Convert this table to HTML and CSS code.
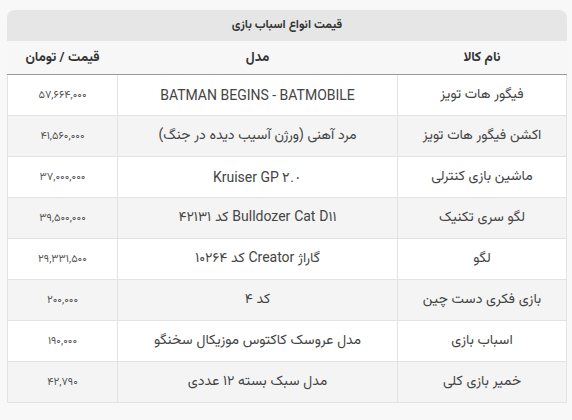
FILE: index.html
```html
<!DOCTYPE html>
<html lang="fa" dir="rtl">
<head>
<meta charset="utf-8">
<link rel="stylesheet" href="styles.css">
</head>
<body>
<div class="wrap">
  <table class="price-table">
    <caption class="caption">قیمت انواع اسباب بازی</caption>
    <thead>
      <tr>
        <th class="c-name">نام کالا</th>
        <th class="c-model">مدل</th>
        <th class="c-price">قیمت / تومان</th>
      </tr>
    </thead>
    <tbody>
      <tr><td>فیگور هات تویز</td><td class="latin">BATMAN BEGINS - BATMOBILE</td><td class="num">۵۷,۶۶۴,۰۰۰</td></tr>
      <tr><td>اکشن فیگور هات تویز</td><td>مرد آهنی (ورژن آسیب دیده در جنگ)</td><td class="num">۴۱,۵۶۰,۰۰۰</td></tr>
      <tr><td>ماشین بازی کنترلی</td><td class="latin">Kruiser GP ۲.۰</td><td class="num">۳۷,۰۰۰,۰۰۰</td></tr>
      <tr><td>لگو سری تکنیک</td><td>Bulldozer Cat D۱۱ کد ۴۲۱۳۱</td><td class="num">۳۹,۵۰۰,۰۰۰</td></tr>
      <tr><td>لگو</td><td>گاراژ Creator کد ۱۰۲۶۴</td><td class="num">۲۹,۳۳۱,۵۰۰</td></tr>
      <tr><td>بازی فکری دست چین</td><td>کد ۴</td><td class="num">۲۰۰,۰۰۰</td></tr>
      <tr><td>اسباب بازی</td><td>مدل عروسک کاکتوس موزیکال سخنگو</td><td class="num">۱۹۰,۰۰۰</td></tr>
      <tr><td>خمیر بازی کلی</td><td>مدل سبک بسته ۱۲ عددی</td><td class="num">۴۲,۷۹۰</td></tr>
    </tbody>
  </table>
</div>
</body>
</html>
```
FILE: styles.css
```css
html, body {
  margin: 0;
  padding: 0;
  background: #f8f8f8;
}
body {
  font-family: "Vazirmatn", "Noto Sans Arabic", "DejaVu Sans", sans-serif;
  color: #3a3a3a;
}
.wrap {
  padding: 10px 5px 0 8px;
  width: 559px;
}
.price-table {
  width: 559px;
  border-collapse: collapse;
  table-layout: fixed;
  font-size: 14px;
}
.caption {
  background: #e6e6e6;
  border-radius: 8px 8px 0 0;
  height: 31px;
  line-height: 31px;
  font-size: 12px;
  font-weight: bold;
  color: #333;
  text-align: center;
}
.price-table th {
  height: 33px;
  font-weight: bold;
  font-size: 13.5px;
  color: #333;
  background: #f7f7f7;
  border-bottom: 1px solid #9a9a9a;
  padding: 0;
}
.c-name { width: 169px; }
.c-model { width: 280px; }
.c-price { width: 110px; }
.price-table td {
  height: 40px;
  padding: 0;
  text-align: center;
  border: 1px solid #e3e3e3;
  background: #ffffff;
  color: #444;
}
.price-table tbody tr:nth-child(even) td {
  background: #f4f4f4;
}
.latin {
  font-family: "Roboto", "Liberation Sans", sans-serif;
}
.price-table td.num {
  font-size: 11px;
  color: #555;
}
```
